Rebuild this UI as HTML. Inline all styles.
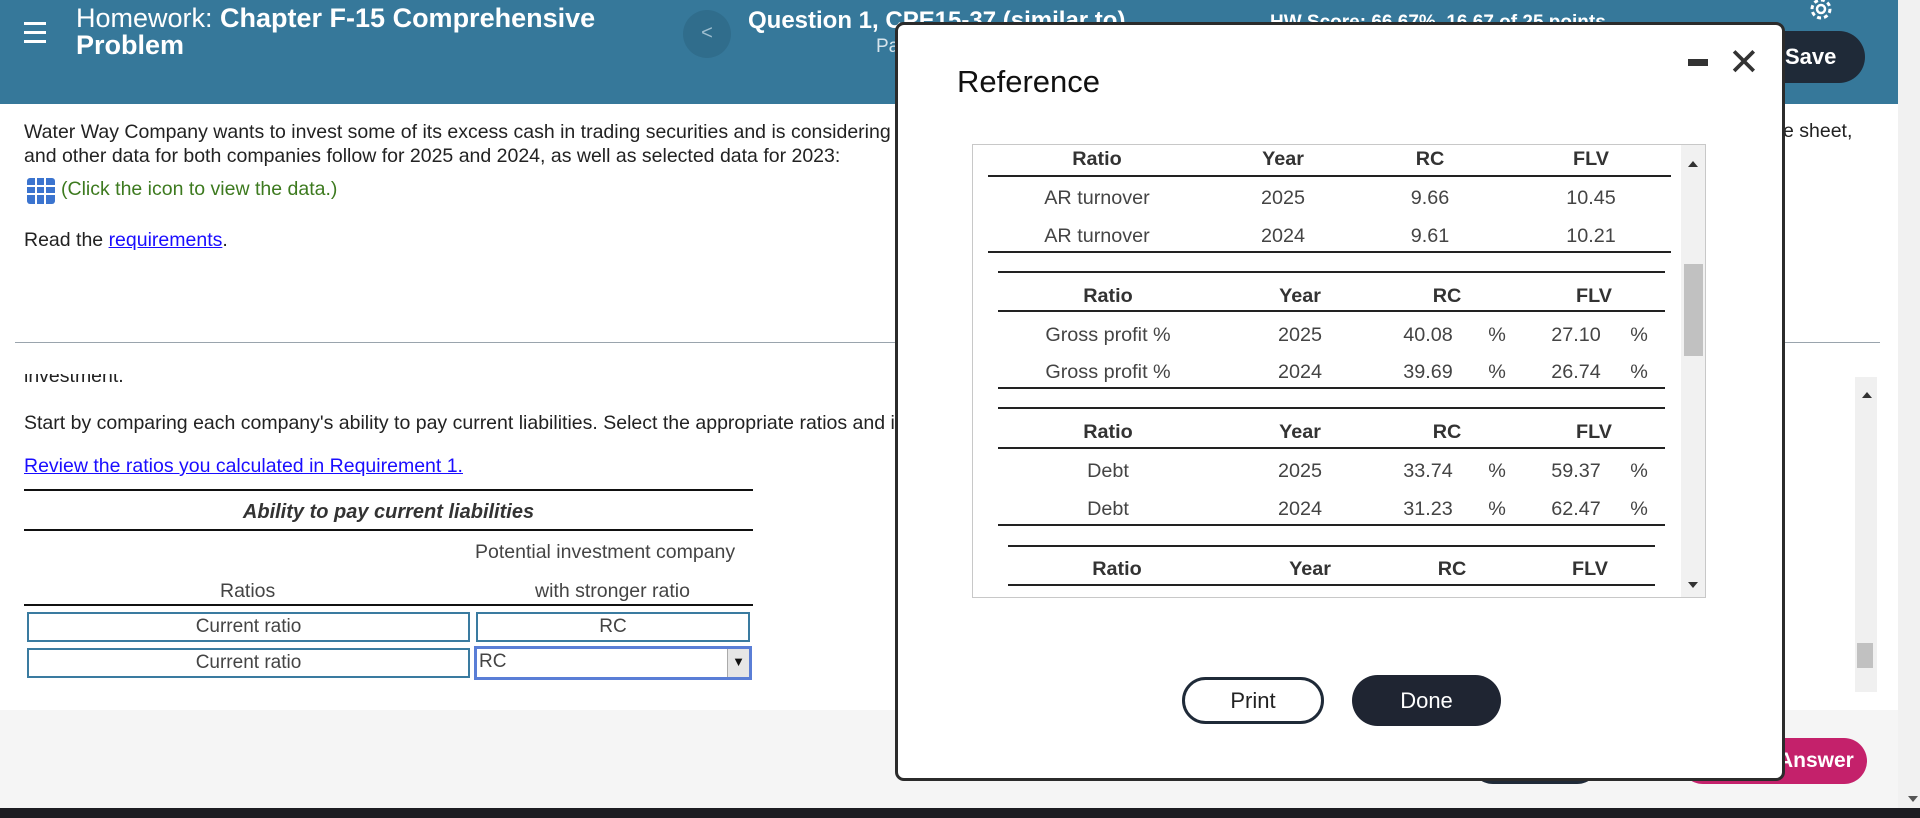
<!DOCTYPE html>
<html><head><meta charset="utf-8"><style>
*{margin:0;padding:0;box-sizing:border-box}
body{width:1920px;height:818px;position:relative;overflow:hidden;background:#fff;font-family:"Liberation Sans",sans-serif;color:#222}
.a{position:absolute;white-space:nowrap}
.hdr{position:absolute;left:0;top:0;width:1898px;height:104px;background:#36789a}
.w{color:#fff}
.t{font-size:19.5px}
.ln{position:absolute;height:2px;background:#111}
.box{position:absolute;border:2px solid #3a7ba0;font-size:19px;color:#444;text-align:center;line-height:26px}
.modal{position:absolute;left:895px;top:22px;width:890px;height:759px;background:#fff;border:3px solid #2b2b2b;border-radius:9px}
.tb{position:absolute;left:972px;top:144px;width:734px;height:454px;border:1px solid #c8c8c8;background:#fff}
.c{position:absolute;transform:translateX(-50%);white-space:nowrap;font-size:19.8px;color:#444}
.h{font-weight:bold;color:#333}
.tl{position:absolute;height:1.5px;background:#222}
</style></head><body>
<div class="hdr"></div>
<div class="a" style="left:24px;top:22px;width:22px;height:3px;background:#fff"></div>
<div class="a" style="left:24px;top:31px;width:22px;height:3px;background:#fff"></div>
<div class="a" style="left:24px;top:40px;width:22px;height:3px;background:#fff"></div>
<div class="a w" style="left:76px;top:5px;font-size:27px;line-height:27px">Homework: <b>Chapter F-15 Comprehensive</b><br><b>Problem</b></div>
<div class="a" style="left:683px;top:10px;width:48px;height:48px;border-radius:50%;background:#306d8c;color:#9fbfd0;text-align:center;line-height:46px;font-size:20px">&lt;</div>
<div class="a w" style="left:748px;top:7px;font-size:24px;font-weight:bold">Question 1, CPE15-37 (similar to)</div>
<div class="a w" style="left:876px;top:36px;font-size:19px;color:#d6e4ec">Pa</div>
<div class="a w" style="left:1270px;top:12px;font-size:19px;font-weight:bold">HW Score: 66.67%, 16.67 of 25 points</div>
<svg class="a" style="left:1806px;top:-6px" width="30" height="30" viewBox="0 0 30 30"><circle cx="15" cy="15" r="9" fill="none" stroke="#fff" stroke-width="3" stroke-dasharray="4 3"/><circle cx="15" cy="15" r="4" fill="none" stroke="#fff" stroke-width="2.5"/></svg>
<div class="a" style="left:1745px;top:31px;width:120px;height:52px;border-radius:26px;background:#1f2a38;color:#fff;font-size:22px;font-weight:bold;line-height:52px;padding-left:40px">Save</div>
<div class="a" style="left:1898px;top:0;width:22px;height:808px;background:#f1f1f1"></div>
<div class="a" style="left:1908px;top:796px;width:0;height:0;border:5px solid transparent;border-top:6px solid #555"></div>

<div class="a t" style="left:24px;top:120px;line-height:24px;color:#222">Water Way Company wants to invest some of its excess cash in trading securities and is considering<br>and other data for both companies follow for 2025 and 2024, as well as selected data for 2023:</div>
<div class="a t" style="left:1783px;top:120px">e sheet,</div>
<div class="a" style="left:27px;top:178px;width:28px;height:26px;background:#3b74cf;border-radius:3px;background-image:linear-gradient(90deg,transparent 8px,#fff 8px,#fff 10px,transparent 10px,transparent 17px,#fff 17px,#fff 19px,transparent 19px),linear-gradient(transparent 7px,#fff 7px,#fff 9px,transparent 9px,transparent 15px,#fff 15px,#fff 17px,transparent 17px)"></div>
<div class="a t" style="left:61px;top:178px;color:#3d7a1f">(Click the icon to view the data.)</div>
<div class="a t" style="left:24px;top:229px">Read the <span style="color:#1a0dff;text-decoration:underline">requirements</span>.</div>
<div class="a" style="left:15px;top:342px;width:1865px;height:1px;background:#9aa4ad"></div>
<div class="a t" style="left:24px;top:374px;height:13px;overflow:hidden"><div style="margin-top:-10px;line-height:24px">investment.</div></div>
<div class="a t" style="left:24px;top:412px">Start by comparing each company's ability to pay current liabilities. Select the appropriate ratios and i</div>
<div class="a t" style="left:24px;top:455px;color:#1a0dff;text-decoration:underline">Review the ratios you calculated in Requirement 1.</div>
<div class="ln" style="left:24px;top:489px;width:729px"></div>
<div class="a" style="left:24px;top:501px;width:729px;text-align:center;font-size:20px;font-weight:bold;font-style:italic;color:#333">Ability to pay current liabilities</div>
<div class="ln" style="left:24px;top:529px;width:729px"></div>
<div class="a t" style="left:475px;top:541px;color:#444">Potential investment company</div>
<div class="a t" style="left:220px;top:580px;color:#444">Ratios</div>
<div class="a t" style="left:535px;top:580px;color:#444">with stronger ratio</div>
<div class="ln" style="left:24px;top:604px;width:729px"></div>
<div class="box" style="left:27px;top:612px;width:443px;height:30px">Current ratio</div>
<div class="box" style="left:476px;top:612px;width:274px;height:30px">RC</div>
<div class="box" style="left:27px;top:648px;width:443px;height:30px">Current ratio</div>
<div class="box" style="left:474px;top:646px;width:278px;height:34px;border:3px solid #5a7ed6;text-align:left;padding-left:2px">RC<span style="position:absolute;right:0;top:0;width:22px;height:28px;background:#e6e6e6;border-left:1px solid #aaa;font-size:13px;text-align:center;color:#111">▼</span></div>
<div class="a" style="left:1855px;top:377px;width:22px;height:315px;background:#f0f0f0"></div>
<div class="a" style="left:1857px;top:643px;width:16px;height:25px;background:#c1c1c1"></div>
<div class="a" style="left:1862px;top:387px;border:5px solid transparent;border-bottom:6px solid #333"></div>

<div class="a" style="left:0;top:710px;width:1898px;height:98px;background:#f5f5f5"></div>
<div class="a" style="left:0;top:808px;width:1920px;height:10px;background:#1d1d22"></div>
<div class="a" style="left:1470px;top:738px;width:130px;height:46px;border-radius:23px;background:#1f2a38"></div>
<div class="a" style="left:1680px;top:738px;width:187px;height:46px;border-radius:23px;background:#c4216b;color:#fff;font-size:21px;font-weight:bold;line-height:46px;padding-left:98px">Answer</div>

<div class="modal"></div>
<div class="a" style="left:957px;top:64px;font-size:31px;color:#111">Reference</div>
<div class="a" style="left:1688px;top:59px;width:20px;height:7px;background:#333"></div>
<div class="a" style="left:1728px;top:44px;font-size:38px;color:#333;line-height:38px">✕</div>

<div class="tb"></div>
<div class="a" style="left:1681px;top:145px;width:24px;height:452px;background:#f1f1f1"></div>
<div class="a" style="left:1684px;top:264px;width:19px;height:92px;background:#c1c1c1"></div>
<div class="a" style="left:1688px;top:156px;border:5px solid transparent;border-bottom:6px solid #333"></div>
<div class="a" style="left:1688px;top:582px;border:5px solid transparent;border-top:6px solid #333"></div>

<div class="c h" style="left:1097px;top:148px">Ratio</div><div class="c h" style="left:1283px;top:148px">Year</div><div class="c h" style="left:1430px;top:148px">RC</div><div class="c h" style="left:1591px;top:148px">FLV</div>
<div class="tl" style="left:988px;top:175px;width:683px"></div>
<div class="c" style="left:1097px;top:187px">AR turnover</div><div class="c" style="left:1283px;top:187px">2025</div><div class="c" style="left:1430px;top:187px">9.66</div><div class="c" style="left:1591px;top:187px">10.45</div>
<div class="c" style="left:1097px;top:225px">AR turnover</div><div class="c" style="left:1283px;top:225px">2024</div><div class="c" style="left:1430px;top:225px">9.61</div><div class="c" style="left:1591px;top:225px">10.21</div>
<div class="tl" style="left:988px;top:251px;width:683px"></div>

<div class="tl" style="left:998px;top:271px;width:667px"></div>
<div class="c h" style="left:1108px;top:285px">Ratio</div><div class="c h" style="left:1300px;top:285px">Year</div><div class="c h" style="left:1447px;top:285px">RC</div><div class="c h" style="left:1594px;top:285px">FLV</div>
<div class="tl" style="left:998px;top:310px;width:667px"></div>
<div class="c" style="left:1108px;top:324px">Gross profit %</div><div class="c" style="left:1300px;top:324px">2025</div><div class="c" style="left:1428px;top:324px">40.08</div><div class="c" style="left:1497px;top:324px">%</div><div class="c" style="left:1576px;top:324px">27.10</div><div class="c" style="left:1639px;top:324px">%</div>
<div class="c" style="left:1108px;top:361px">Gross profit %</div><div class="c" style="left:1300px;top:361px">2024</div><div class="c" style="left:1428px;top:361px">39.69</div><div class="c" style="left:1497px;top:361px">%</div><div class="c" style="left:1576px;top:361px">26.74</div><div class="c" style="left:1639px;top:361px">%</div>
<div class="tl" style="left:998px;top:387px;width:667px"></div>

<div class="tl" style="left:998px;top:407px;width:667px"></div>
<div class="c h" style="left:1108px;top:421px">Ratio</div><div class="c h" style="left:1300px;top:421px">Year</div><div class="c h" style="left:1447px;top:421px">RC</div><div class="c h" style="left:1594px;top:421px">FLV</div>
<div class="tl" style="left:998px;top:447px;width:667px"></div>
<div class="c" style="left:1108px;top:460px">Debt</div><div class="c" style="left:1300px;top:460px">2025</div><div class="c" style="left:1428px;top:460px">33.74</div><div class="c" style="left:1497px;top:460px">%</div><div class="c" style="left:1576px;top:460px">59.37</div><div class="c" style="left:1639px;top:460px">%</div>
<div class="c" style="left:1108px;top:498px">Debt</div><div class="c" style="left:1300px;top:498px">2024</div><div class="c" style="left:1428px;top:498px">31.23</div><div class="c" style="left:1497px;top:498px">%</div><div class="c" style="left:1576px;top:498px">62.47</div><div class="c" style="left:1639px;top:498px">%</div>
<div class="tl" style="left:998px;top:524px;width:667px"></div>

<div class="tl" style="left:1008px;top:545px;width:647px"></div>
<div class="c h" style="left:1117px;top:558px">Ratio</div><div class="c h" style="left:1310px;top:558px">Year</div><div class="c h" style="left:1452px;top:558px">RC</div><div class="c h" style="left:1590px;top:558px">FLV</div>
<div class="tl" style="left:1008px;top:584px;width:647px"></div>

<div class="a" style="left:1182px;top:677px;width:142px;height:47px;border:3px solid #1f2a38;border-radius:24px;text-align:center;line-height:41px;font-size:22px;color:#222">Print</div>
<div class="a" style="left:1352px;top:675px;width:149px;height:51px;background:#1f2532;border-radius:26px;text-align:center;line-height:51px;font-size:22px;color:#fff">Done</div>
</body></html>
